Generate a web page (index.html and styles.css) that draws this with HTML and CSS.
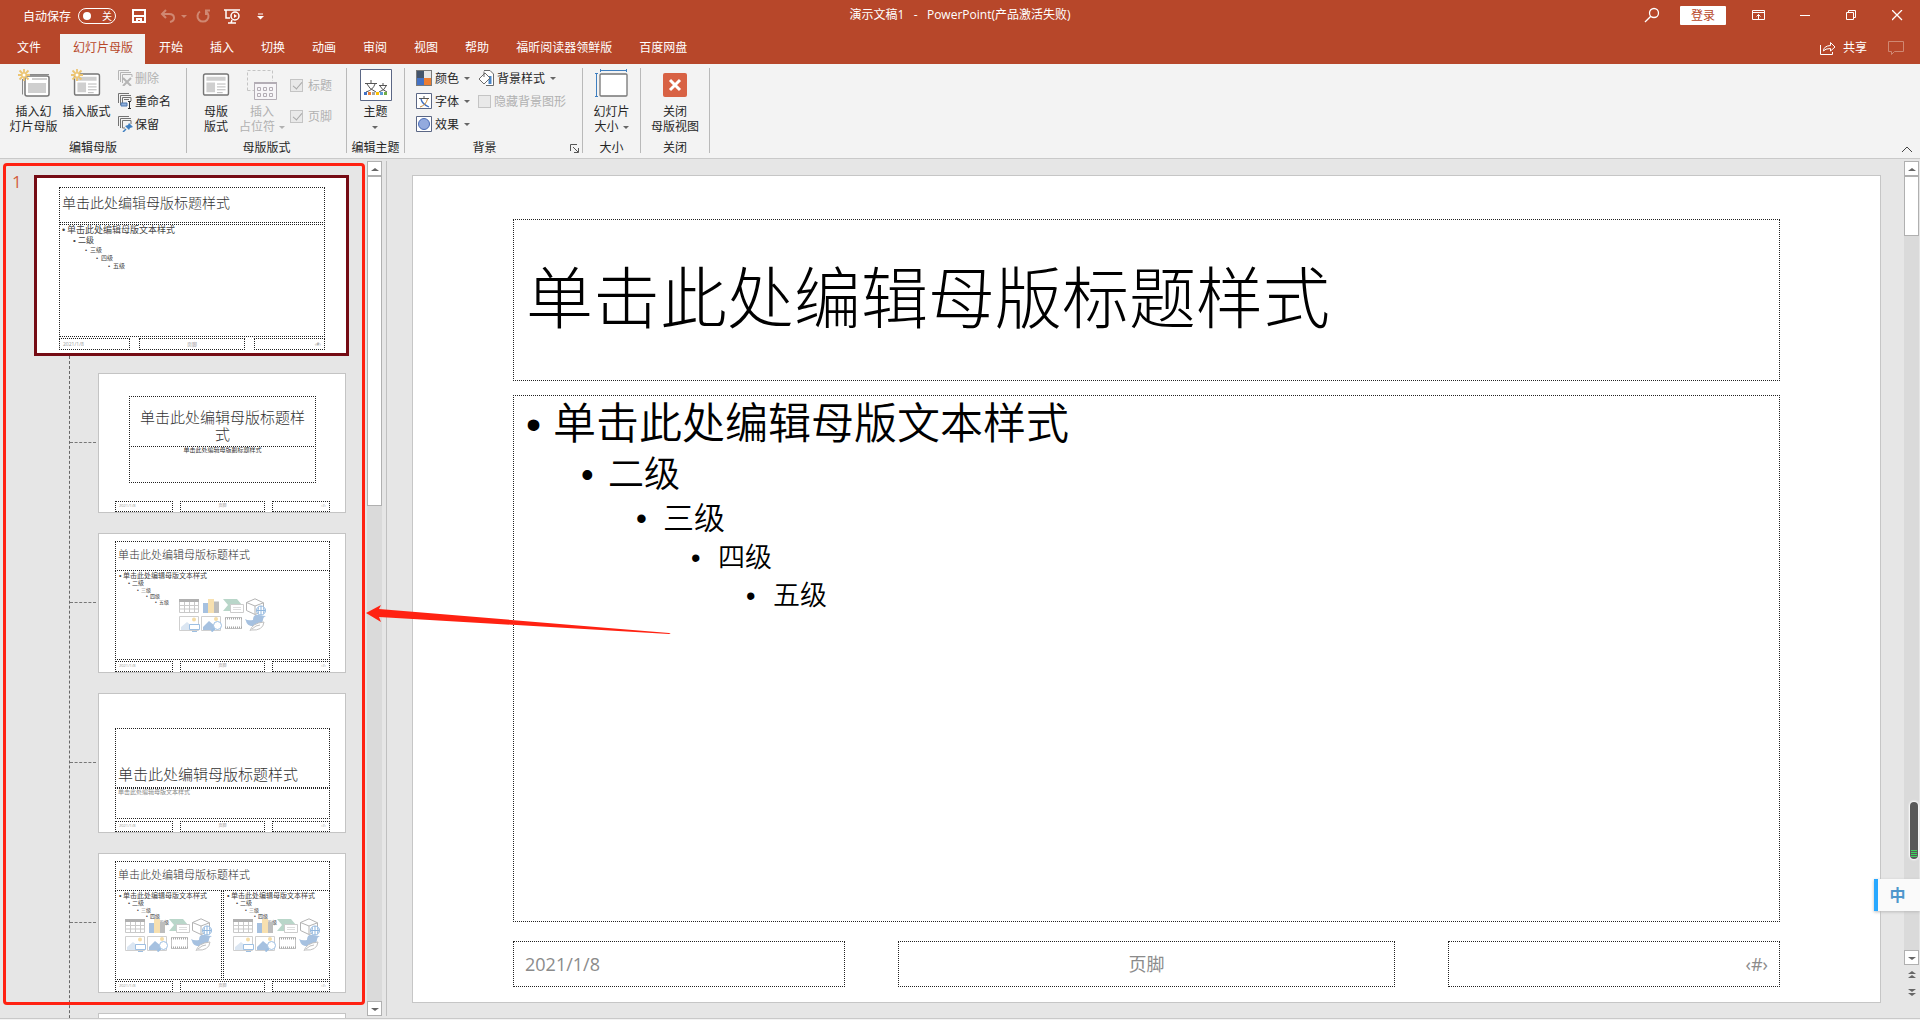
FILE: index.html
```html
<!DOCTYPE html>
<html lang="zh-CN">
<head>
<meta charset="utf-8">
<title>演示文稿1 - PowerPoint</title>
<link rel="stylesheet" href="styles.css">
</head>
<body>
<svg class="defs" aria-hidden="true">
  <symbol id="content-icons" viewBox="0 0 88 34">
    <g fill="none" stroke="#c9c9c9">
      <path d="M.5 1.500h19v13H.5zM.5 7.500h19M.5 11h19M5.500 4v10M10.500 4v10M15.500 4v10"/>
      <path d="M0 2.500h20" stroke="#b0b0b0" stroke-width="3"/>
    </g>
    <path d="M24 5h5v10h-5z" fill="#a6c1e0"/><path d="M29 1h6v14h-6z" fill="#f7e0b0"/><path d="M35 3.500h5V15h-5z" fill="#bdbdbd"/>
    <path d="M44 1h14l5 6-5 6H44l5-6z" fill="#b9d6c9"/>
    <path d="M51.500 6.500h13v8h-13z" fill="#fff" stroke="#ccc"/><path d="M54 9.500h8M54 11.500h8" stroke="#ddd"/>
    <path d="M67.500 4.500 76 .8l8.500 4v8L76 16.500l-8.500-4zM67.500 4.500 76 8l8.500-3.200M76 8v8" fill="#fff" stroke="#b3b3b3"/>
    <circle cx="82" cy="12.500" r="4.500" fill="#fff" stroke="#8fb6de"/><path d="M77.500 12.500h9M82 8v9M79.500 9.500q-1 3 0 6M84.500 9.500q1 3 0 6" fill="none" stroke="#8fb6de"/>
    <g fill="#fff" stroke="#cfcfcf"><path d="M.5 18.500h19v14H.5zM22.500 18.500h19v14h-19z"/></g>
    <path d="M2 32v-3l6-5 5 4v4z" fill="#dbe6f2"/><circle cx="15" cy="21.500" r="2" fill="#f5dca6"/>
    <path d="M10.500 26.500h10v5h-10zM13 33.500h5" fill="#fff" stroke="#9dbfe2"/>
    <path d="M24 32v-3l6-6 6 5v4z" fill="#a6c1e0"/><circle cx="37" cy="21" r="2" fill="#f5dca6"/>
    <circle cx="38.500" cy="27.500" r="4" fill="#fff" stroke="#9dbfe2"/><path d="m35.500 30.500-3 3" stroke="#9dbfe2" stroke-width="2"/>
    <path d="M46.500 19.500h16v11h-16z" fill="#fff" stroke="#c4c4c4"/><path d="M46 20.500h17M46 29.500h17" stroke="#a8a8a8" stroke-width="2" stroke-dasharray="1 1"/>
    <path d="M66 21q3 2 8 1 0-6 6-5 4 1 7 1-3 1-3 4-1 6-8 6-8 1-9-5z" fill="#a6c1e0"/>
    <path d="M71 33q2-8 14-9-1 9-13 8M73 31q4-4 8-4" fill="#fff" stroke="#c0c0c0"/>
  </symbol>
  <symbol id="layout" viewBox="0 0 28 24">
    <rect x="1" y="1" width="26" height="22" rx="2" fill="#fff" stroke="#767676" stroke-width="1.500"/>
    <path d="M4 4h20v4H4zM4 10h9v10H4z" fill="#cfcfcf"/><path d="M15 11.500h9M15 14.500h9M15 17.500h9M15 20.500h6" stroke="#b5b5b5"/>
  </symbol>
  <symbol id="spark" viewBox="0 0 12 12">
    <path d="M6 0v12M0 6h12M1.500 1.500l9 9M10.500 1.500l-9 9" stroke="#ecc573" stroke-width="1.800"/><circle cx="6" cy="6" r="1.500" fill="#fff"/>
  </symbol>
</svg>

<div class="app">
  <header class="titlebar">
    <div class="quick">
      <label class="autosave" for="autosave">自动保存</label>
      <button class="toggle" id="autosave" role="switch" aria-checked="false"><i></i>关</button>
      <button class="qa save" aria-label="保存"><svg width="16" height="16" fill="none" stroke="#fff" stroke-width="2"><path d="M2 2h12v12H2z"/><path d="M3 8h10M6 14v-3h4v3" /></svg></button>
      <button class="qa undo" aria-label="撤消"><svg width="16" height="16" fill="none" stroke="#d08872" stroke-width="2"><path d="M6 2 2 6l4 4M2 6h7q5 0 5 4 0 3-4 4"/></svg></button>
      <i class="arrow faded"></i>
      <button class="qa redo" aria-label="恢复"><svg width="16" height="16" fill="none" stroke="#d08872" stroke-width="2"><path d="M5 3.500a5.500 5.500 0 1 0 6 0M11 7V2.500h4"/></svg></button>
      <button class="qa show" aria-label="从头开始"><svg width="18" height="17" fill="none" stroke="#fff" stroke-width="1.500"><path d="M1 2h16M3 2v8h4M5 15h8M8 15l1-3"/><circle cx="12" cy="8" r="4"/><path d="m11 6 3 2-3 2z" fill="#fff" stroke="none"/></svg></button>
      <button class="qa more" aria-label="自定义"><svg width="7" height="7"><path d="M1 1h5" stroke="#fff"/><path d="M0 3h7L3.500 6.500z" fill="#fff"/></svg></button>
    </div>
    <h1 class="doc-name">演示文稿1&nbsp;&nbsp; -&nbsp;&nbsp; PowerPoint(产品激活失败)</h1>
    <div class="window">
      <button class="search" aria-label="搜索"><svg width="16" height="16" fill="none" stroke="#fff" stroke-width="1.300"><circle cx="10" cy="6" r="4.500"/><path d="M6.800 9.200 1 15"/></svg></button>
      <button class="login">登录</button>
      <button class="win" aria-label="功能区显示选项"><svg width="14" height="12" fill="none" stroke="#fff"><path d="M.5 1.500h12v9H.5zM.5 3.500h12M6.500 10V5.500M4.500 7.500l2-2 2 2"/></svg></button>
      <button class="win" aria-label="最小化"><svg width="11" height="11"><path d="M0 5.500h10" stroke="#fff"/></svg></button>
      <button class="win" aria-label="还原"><svg width="11" height="11" fill="none" stroke="#fff"><path d="M.5 2.500h7v7h-7zM2.500 2.500v-2h7v7h-2"/></svg></button>
      <button class="win" aria-label="关闭"><svg width="11" height="11"><path d="m0 0 10 10M10 0 0 10" stroke="#fff" stroke-width="1.300"/></svg></button>
    </div>
  </header>

  <nav class="tabs">
    <button class="file">文件</button>
    <button class="active">幻灯片母版</button>
    <button>开始</button><button>插入</button><button>切换</button><button>动画</button><button>审阅</button><button>视图</button><button>帮助</button><button>福昕阅读器领鲜版</button><button>百度网盘</button>
    <button class="share"><svg width="16" height="14" fill="none" stroke="#fff"><path d="M.5 4v9.500h12V11M3.500 10q0-5 7-5.500V1.500L15 6l-4.500 4V7.500Q5 7.500 3.500 10z"/></svg>共享</button>
    <button class="comments" aria-label="批注"><svg width="17" height="15" fill="none" stroke="#d08872"><path d="M.5.5h15v10h-9l-3 3v-3h-3z"/></svg></button>
  </nav>

  <section class="ribbon">
    <div class="group g-edit">
      <div class="tools">
        <button class="big"><svg width="32" height="30"><path d="M4.500 10v15.500M7 5.500h24" stroke="#8a8a8a" fill="none"/><rect x="7" y="7" width="24" height="20" rx="2" fill="#fff" stroke="#767676" stroke-width="1.500"/><path d="M14 9h15v2H14zM10 14h18v10H10z" fill="#cfcfcf"/><use href="#spark" width="12" height="12"/></svg><span>插入幻<br>灯片母版</span></button>
        <button class="big"><svg width="32" height="30"><use href="#layout" x="2" y="4" width="28" height="23"/><use href="#spark" width="12" height="12"/></svg><span>插入版式</span></button>
        <div class="stack">
          <button disabled><svg width="16" height="16" fill="none" stroke="#b5b5b5"><path d="M1.500 10V.5H12M3.500 12V2.500H14M5.500 13V4.500H15V7"/><path d="m6 8 8 8M14 8l-8 8" stroke-width="2"/></svg>删除</button>
          <button><svg width="16" height="16" fill="none" stroke="#737373"><path d="M1.500 10V.5H12M3.500 12V2.500H14M5.500 13V4.500H14V8M7 6.500h5"/><path d="M4 10h6v3H4z" fill="#8fb0dc" stroke="#4f78b0"/><path d="M12.500 9v6M11 8.500h3M11 15.500h3" stroke="#333"/></svg>重命名</button>
          <button><svg width="16" height="16" fill="none" stroke="#737373"><path d="M1.500 10V.5H12M3.500 12V2.500H14M8 12H5.500V4.500H14V8"/><path d="m12 7 4 4-3 1-1 2-4-4 3-1z" fill="#3f7fc0" stroke="none"/><path d="m9 13-3 3" stroke="#3f7fc0" stroke-width="1.500"/></svg>保留</button>
        </div>
      </div>
      <h2>编辑母版</h2>
    </div>
    <div class="group g-layout">
      <div class="tools">
        <button class="big"><svg width="32" height="30"><use href="#layout" x="2" y="4" width="28" height="23"/></svg><span>母版<br>版式</span></button>
        <button class="big" disabled><svg width="32" height="32" fill="none"><path d="M1.500 21.500v-20h25V12M1.500 21.500H8" stroke="#c4c4c4" stroke-dasharray="3 2"/><path d="M8.500 13.500h22v17h-22z" fill="#f7f5f8" stroke="#b3adb5"/><path d="M8 14h23" stroke="#b3adb5" stroke-width="2"/><path d="M11.500 18.500h3v3h-3zM17.500 18.500h3v3h-3zM23.500 18.500h3v3h-3zM11.500 24.500h3v3h-3zM17.500 24.500h3v3h-3zM23.500 24.500h3v3h-3z" stroke="#b3adb5"/></svg><span>插入<br>占位符<i class="arrow"></i></span></button>
        <div class="checks">
          <label><input type="checkbox" checked disabled>标题</label>
          <label><input type="checkbox" checked disabled>页脚</label>
        </div>
      </div>
      <h2>母版版式</h2>
    </div>
    <div class="group g-theme">
      <div class="tools">
        <button class="big"><svg width="32" height="32"><path d="M.5.5h31v31H.5z" fill="#fff" stroke="#5b6785"/><g fill="none" stroke="#555"><path d="M5 14.500h12M11 11v3.500M15 15q-2 6-9 8M7 15q2 5 9 8M19 16.500h8M23 14v2.500M26 17q-1 4-7 6M20 17q2 4 7 6"/></g><path d="M4 23h3v3H4z" fill="#4472c4"/><path d="M8 23h3v3H8z" fill="#ed7d31"/><path d="M12 23h3v3h-3z" fill="#a5a5a5"/><path d="M16 23h3v3h-3z" fill="#ffc000"/><path d="M20 23h3v3h-3z" fill="#5b9bd5"/><path d="M24 23h3v3h-3z" fill="#70ad47"/></svg><span>主题<br><i class="arrow"></i></span></button>
      </div>
      <h2>编辑主题</h2>
    </div>
    <div class="group g-back">
      <div class="tools">
        <div class="stack">
          <button><svg width="16" height="16"><path d="M0 0h16v16H0z" fill="#7a7a7a"/><path d="M1 1h7v7H1z" fill="#44546a"/><path d="M8 1h7v7H8z" fill="#e7e6e6"/><path d="M1 8h7v7H1z" fill="#4472c4"/><path d="M8 8h7v7H8z" fill="#ed7d31"/></svg>颜色<i class="arrow"></i></button>
          <button><svg width="16" height="16" fill="none"><path d="M.5.5h15v15H.5z" fill="#fff" stroke="#5b6785"/><path d="M3 5.500h10M8 3v2.500" stroke="#555"/><path d="M5 6q1 5 8 8" stroke="#3f6fc0" stroke-width="1.300"/><path d="M11.500 6Q10 12 4 14" stroke="#c58a3a"/></svg>字体<i class="arrow"></i></button>
          <button><svg width="16" height="16"><path d="M.5.5h15v15H.5z" fill="#fff" stroke="#5b6785"/><circle cx="8" cy="8" r="5.500" fill="#93aade" stroke="#4a6cb5"/></svg>效果<i class="arrow"></i></button>
        </div>
        <div class="stack">
          <button><svg width="16" height="16" fill="none" stroke="#6b6b6b"><path d="M6 .5h6L15.500 4v11.500H8" fill="#fff"/><path d="M12 6v8" stroke="#4a86c8" stroke-width="3"/><path d="m1 9 6-6 5 5-6 6zM6 7V1.500" fill="#fff"/></svg>背景样式<i class="arrow"></i></button>
          <label><input type="checkbox" disabled>隐藏背景图形</label>
        </div>
      </div>
      <h2>背景</h2>
      <button class="launcher" aria-label="设置背景格式"><svg width="9" height="9" fill="none" stroke="#555"><path d="M.5 7V.5H7M3 3l5 5M8.500 4v4.500H4"/></svg></button>
    </div>
    <div class="group g-size">
      <div class="tools">
        <button class="big"><svg width="33" height="30" fill="none"><path d="M5 1.500h27M5.500 0v3M31.500 0v3M1.500 5v22M0 4.500h3M0 27.500h3" stroke="#3f7fc0"/><rect x="5" y="5" width="27" height="22" rx="1" fill="#fff" stroke="#767676" stroke-width="1.300"/></svg><span>幻灯片<br>大小<i class="arrow"></i></span></button>
      </div>
      <h2>大小</h2>
    </div>
    <div class="group g-close">
      <div class="tools">
        <button class="big"><svg width="32" height="30"><rect x="4" y="4" width="24" height="24" rx="2" fill="#d86244"/><path d="m11 11 10 10M21 11 11 21" stroke="#fff" stroke-width="3"/></svg><span>关闭<br>母版视图</span></button>
      </div>
      <h2>关闭</h2>
    </div>
    <button class="collapse" aria-label="折叠功能区"><svg width="12" height="7" fill="none" stroke="#444"><path d="m1 6 5-5 5 5"/></svg></button>
  </section>

  <main class="work">
    <aside class="thumbs">
      <div class="master">
        <b>1</b>
        <div class="mini large">
          <div class="ph name">单击此处编辑母版标题样式</div>
          <ul class="ph body levels"><li>单击此处编辑母版文本样式</li><li>二级</li><li>三级</li><li>四级</li><li>五级</li></ul>
          <div class="feet"><p class="ph">2021/1/8</p><p class="ph">页脚</p><p class="ph">‹#›</p></div>
        </div>
      </div>
      <ul class="layouts">
        <li><div class="mini cover">
          <div class="ph name">单击此处编辑母版标题样式</div>
          <div class="ph sub">单击此处编辑母版副标题样式</div>
          <div class="feet"><p class="ph">2021/1/8</p><p class="ph">页脚</p><p class="ph">‹#›</p></div>
        </div></li>
        <li><div class="mini">
          <div class="ph name">单击此处编辑母版标题样式</div>
          <div class="bodies">
            <div class="ph body"><ul class="levels"><li>单击此处编辑母版文本样式</li><li>二级</li><li>三级</li><li>四级</li><li>五级</li></ul><svg class="insert"><use href="#content-icons"/></svg></div>
          </div>
          <div class="feet"><p class="ph">2021/1/8</p><p class="ph">页脚</p><p class="ph">‹#›</p></div>
        </div></li>
        <li><div class="mini section">
          <div class="ph name">单击此处编辑母版标题样式</div>
          <div class="ph sub">单击此处编辑母版文本样式</div>
          <div class="feet"><p class="ph">2021/1/8</p><p class="ph">页脚</p><p class="ph">‹#›</p></div>
        </div></li>
        <li><div class="mini">
          <div class="ph name">单击此处编辑母版标题样式</div>
          <div class="bodies">
            <div class="ph body"><ul class="levels"><li>单击此处编辑母版文本样式</li><li>二级</li><li>三级</li><li>四级</li><li>五级</li></ul><svg class="insert"><use href="#content-icons"/></svg></div>
            <div class="ph body"><ul class="levels"><li>单击此处编辑母版文本样式</li><li>二级</li><li>三级</li><li>四级</li><li>五级</li></ul><svg class="insert"><use href="#content-icons"/></svg></div>
          </div>
          <div class="feet"><p class="ph">2021/1/8</p><p class="ph">页脚</p><p class="ph">‹#›</p></div>
        </div></li>
        <li><div class="mini"></div></li>
      </ul>
      <div class="frame"></div>
    </aside>
    <div class="scroll left">
      <button class="step" aria-label="向上"><i class="arrow up"></i></button>
      <div class="grip"></div>
      <button class="step end" aria-label="向下"><i class="arrow"></i></button>
    </div>
    <div class="stage">
      <article class="slide">
        <h2 class="ph title">单击此处编辑母版标题样式</h2>
        <ul class="ph text levels"><li>单击此处编辑母版文本样式</li><li>二级</li><li>三级</li><li>四级</li><li>五级</li></ul>
        <p class="ph date">2021/1/8</p>
        <p class="ph footer">页脚</p>
        <p class="ph number">‹#›</p>
      </article>
    </div>
    <div class="scroll right">
      <button class="step" aria-label="向上"><i class="arrow up"></i></button>
      <div class="grip"></div>
      <button class="step end" aria-label="向下"><i class="arrow"></i></button>
      <button class="page" aria-label="上一张"><i class="arrow up"></i><i class="arrow up"></i></button>
      <button class="page" aria-label="下一张"><i class="arrow"></i><i class="arrow"></i></button>
    </div>
    <svg class="pointer" width="306" height="32" aria-hidden="true"><path d="M0 9 15 1l-2 4 290 24q3 1 0 1L13 13l2 5z" fill="#ff2212"/></svg>
    <div class="meter"><i></i></div>
    <button class="ime">中</button>
  </main>
</div>
</body>
</html>
```
FILE: styles.css
```css
* { box-sizing: border-box; }

body {
  margin: 0;
  background: #f3f3f3;
  color: #262626;
  font: 12px/15px "Open Sans", "Noto Sans CJK SC", sans-serif;
}

h1, h2, p, ul { margin: 0; padding: 0; font: inherit; }
ul { list-style: none; }
svg { display: block; flex: none; }
button {
  margin: 0;
  padding: 0;
  border: 0;
  background: none;
  color: inherit;
  font: inherit;
  white-space: nowrap;
}
.defs { position: absolute; width: 0; height: 0; }

.app { display: flex; flex-direction: column; height: 100vh; overflow: hidden; }

.arrow {
  display: inline-block;
  border: solid transparent;
  border-width: 3px 3px 0;
  border-top-color: #666;
  vertical-align: middle;
}
.arrow.up { border-width: 0 3px 3px; border-bottom-color: #666; }
.arrow.faded { border-top-color: #d08872; }

/* Title bar */
.titlebar {
  display: grid;
  grid-template-columns: 1fr auto 1fr;
  height: 34px;
  padding-bottom: 8px;
  background: #b7472a;
  color: #fff;
}
.quick { display: flex; align-items: center; padding: 6px 0 0 23px; }
.toggle {
  display: flex;
  align-items: center;
  gap: 11px;
  width: 38px;
  height: 16px;
  margin: 0 15px 0 7px;
  padding-left: 4px;
  border: 1px solid #fff;
  border-radius: 8px;
  font-size: 10px;
}
.toggle i { width: 8px; height: 8px; border-radius: 50%; background: #fff; }
.undo { margin: 0 5px 0 13px; }
.redo { margin: 0 12px 0 8px; }
.more { margin-left: 16px; }
.doc-name { padding-top: 7px; }
.window { display: flex; justify-content: flex-end; padding: 6px 0 0; }
.search { align-self: center; margin: 0 20px 2px 0; }
.login {
  width: 46px;
  height: 19px;
  margin-right: 10px;
  border-radius: 1px;
  background: #fff;
  color: #b7472a;
}
.win { display: grid; place-items: center; width: 46px; height: 18px; }

/* Tabs */
.tabs {
  display: flex;
  gap: 1px;
  height: 30px;
  padding-right: 15px;
  background: #b7472a;
  color: #fff;
}
.tabs button { padding: 0 13px 3px; }
.tabs .file { padding: 0 18px 3px 17px; }
.tabs .active { width: 85px; background: #f3f3f3; color: #b7472a; }
.tabs .share { display: flex; align-items: center; gap: 7px; margin-left: auto; padding: 0 20px 3px; }
.tabs .comments { padding: 0 0 1px; }

/* Ribbon */
.ribbon {
  display: flex;
  height: 95px;
  padding: 4px 7px 5px 0;
  border-bottom: 1px solid #c9c9c9;
}
.group {
  display: flex;
  flex-direction: column;
  position: relative;
  border-right: 1px solid #b9b9b9;
}
.group h2 { margin-top: auto; text-align: center; line-height: 10px; white-space: nowrap; }
.g-edit { width: 187px; }
.g-layout { width: 160px; }
.g-theme { width: 58px; }
.g-back { width: 178px; }
.g-size { width: 58px; }
.g-close { width: 69px; }
.tools { display: flex; }
.g-edit .tools { padding-left: 7px; }
.g-layout .tools { padding-left: 8px; }
.g-back .tools { padding-left: 11px; gap: 8px; }
.g-theme .tools, .g-size .tools, .g-close .tools { justify-content: center; }
.big {
  display: flex;
  flex-direction: column;
  align-items: center;
  width: 53px;
  padding-top: 1px;
}
.g-layout .big { width: 42px; }
.g-layout .big:disabled { width: 50px; }
.big svg { height: 35px; }
.big .arrow { margin-left: 4px; }
.g-theme .big .arrow { margin: 0; }
.stack { display: flex; flex-direction: column; gap: 1px; }
.stack button, .stack label { display: flex; align-items: center; gap: 3px; height: 22px; padding-bottom: 2px; }
.stack button .arrow { margin-left: 2px; }
.g-edit .stack { margin-left: 4px; }
.g-edit .stack svg { margin-right: -1px; }
button:disabled, label:has(:disabled) { color: #b1b1b1; }
button:disabled .arrow { border-top-color: #b1b1b1; }
.checks { display: flex; flex-direction: column; gap: 16px; padding: 10px 0 0 3px; }
.checks label { display: flex; gap: 5px; }
input[type="checkbox"] {
  appearance: none;
  width: 13px;
  height: 13px;
  margin: 1px 0;
  border: 1px solid #c4c4c4;
  background: #e9e9e9;
}
input:checked::after {
  content: "";
  display: block;
  width: 4px;
  height: 8px;
  margin: 0 0 0 4px;
  border: solid #a8a8a8;
  border-width: 0 1px 1px 0;
  rotate: 40deg;
}
.launcher { position: absolute; right: 3px; bottom: 0; }
.g-back h2 { padding-right: 18px; }
.collapse { align-self: flex-end; margin-left: auto; }

/* Workspace */
.work {
  display: flex;
  flex: 1;
  min-height: 0;
  position: relative;
  margin-bottom: 1px;
  border-bottom: 1px solid #c9c9c9;
  background: #e6e6e6;
}
.ph { border: 1px dotted #222; }

.thumbs {
  position: relative;
  flex: none;
  width: 367px;
  padding-top: 16px;
  overflow: hidden;
}
.frame {
  position: absolute;
  inset: 4px 2px 13px 3px;
  border: 3px solid #ff2212;
  border-radius: 4px;
}
.master { display: flex; }
.master b { width: 34px; padding-left: 12px; color: #d35f42; font-size: 17px; font-weight: 400; line-height: 14px; }
.layouts {
  display: flex;
  flex-direction: column;
  gap: 20px;
  margin-left: 69px;
  padding: 17px 0 0 28px;
  border-left: 1px dashed #666;
}
.layouts > li { position: relative; }
.layouts > li::before {
  content: "";
  position: absolute;
  top: 69px;
  left: -28px;
  width: 26px;
  border-top: 1px dashed #777;
}

.mini {
  display: flex;
  flex-direction: column;
  width: 248px;
  height: 140px;
  padding: 7px 15px 0 16px;
  border: 1px solid #c4c4c4;
  background: #fff;
  overflow: hidden;
  color: #333;
  font-size: 7px;
  line-height: 7px;
  white-space: nowrap;
}
.mini .name { height: 30px; padding: 0 2px; font-size: 11px; font-weight: 300; line-height: 26px; }
.bodies { display: flex; gap: 1px; height: 90px; margin-top: -1px; }
.mini .body { position: relative; flex: 1; min-width: 0; }
.insert { position: absolute; inset: 0; width: 88px; height: 34px; margin: auto; }
.feet {
  display: grid;
  grid-template-columns: 58fr 85fr 58fr;
  gap: 7px;
  height: 11px;
  margin-top: auto;
  color: #999;
  font-size: 4px;
}
.feet p { padding: 0 3px; }
.feet p:nth-child(2) { text-align: center; }
.feet p:nth-child(3) { text-align: right; }

.mini.large {
  width: 315px;
  height: 181px;
  padding: 9px 21px 3px 22px;
  border: 3px solid #750b14;
}
.large .name { height: 36px; font-size: 14px; line-height: 30px; }
.large .body { flex: none; height: 113px; margin-top: 1px; }
.large .feet { grid-template-columns: 71fr 106fr 71fr; gap: 9px; height: 12px; font-size: 5px; line-height: 10px; }

.mini.cover { padding-top: 22px; }
.mini.cover .name, .mini.section .name { font-size: 15px; line-height: 17px; }
.mini.cover .name { height: 51px; margin: 0 14px; padding: 12px 8px 0; text-align: center; white-space: normal; }
.cover .sub { height: 37px; margin: -1px 14px 0; text-align: center; font-size: 6px; }
.mini.section { padding-top: 34px; }
.mini.section .name { height: 60px; padding-top: 37px; }
.section .sub { height: 31px; padding-left: 2px; color: #888; font-size: 6px; line-height: 6px; }

/* Outline levels, indented step by step */
.levels li::before { content: "•"; display: inline-block; font-family: "Liberation Sans", sans-serif; }
.mini .levels { padding-top: 1px; color: #444; }
.mini .levels li { height: 6px; padding-left: 3px; font-size: 5px; line-height: 7px; }
.mini .levels li::before { width: 4px; }
.mini .levels li:nth-child(1) { height: 8px; font-size: 7px; }
.mini .levels li:nth-child(2) { height: 7px; padding-left: 12px; font-size: 6px; }
.mini .levels li:nth-child(3) { padding-left: 21px; }
.mini .levels li:nth-child(4) { padding-left: 30px; }
.mini .levels li:nth-child(5) { padding-left: 39px; }
.mini.large .levels li { height: 8px; padding-left: 2px; font-size: 6px; line-height: 8px; }
.mini.large .levels li::before { width: 5px; }
.mini.large .levels li:nth-child(1) { height: 10px; font-size: 9px; }
.mini.large .levels li:nth-child(2) { height: 10px; padding-left: 13px; font-size: 8px; }
.mini.large .levels li:nth-child(3) { padding-left: 25px; }
.mini.large .levels li:nth-child(4) { padding-left: 36px; }
.mini.large .levels li:nth-child(5) { padding-left: 48px; }

/* Slide being edited */
.stage { flex: 1; min-width: 0; margin: 2px 0 2px 4px; padding: 14px 23px 0 25px; border-left: 1px solid #c0c0c0; }
.slide {
  display: grid;
  grid-template-columns: 333fr 53fr 497fr 53fr 333fr;
  grid-template-rows: 162fr 14fr 527fr 19fr 46fr;
  aspect-ratio: 1469 / 828;
  padding: 43px 100px 15px;
  border: 1px solid #c6c6c6;
  background: #fff;
  color: #000;
}
.title {
  display: flex;
  align-items: center;
  grid-area: 1 / 1 / 2 / 6;
  padding: 0 12px 6px;
  font-size: 67px;
  font-weight: 300;
  line-height: 80px;
}
.text { grid-area: 3 / 1 / 4 / 6; padding-top: 2px; font-size: 27px; font-weight: 350; }
.text li { padding-left: 12px; line-height: 50px; }
.text li::before { width: 27px; }
.text li:nth-child(1) { font-size: 43px; line-height: 49px; }
.text li:nth-child(2) { padding-left: 67px; font-size: 36px; }
.text li:nth-child(3) { padding-left: 122px; font-size: 31px; line-height: 34px; }
.text li:nth-child(4) { padding-left: 177px; line-height: 42px; }
.text li:nth-child(5) { padding-left: 232px; line-height: 32px; }
.date, .footer, .number { grid-row: 5; padding: 0 11px; color: #8b8b8b; font-size: 18px; line-height: 44px; }
.date { grid-column: 1; }
.footer { grid-column: 3; text-align: center; }
.number { grid-column: 5; text-align: right; }

/* Scroll bars */
.scroll {
  display: flex;
  flex-direction: column;
  flex: none;
  width: 15px;
  margin: 2px 0;
  background: #dadada;
}
.scroll .step { height: 15px; border: 1px solid #b0b0b0; background: #fff; line-height: 9px; }
.scroll .arrow { border-left-width: 4px; border-right-width: 4px; }
.grip { height: 330px; border: 1px solid #b0b0b0; background: #fff; }
.right .grip { height: 60px; }
.end { margin-top: auto; }
.scroll.right { width: 16px; padding-right: 1px; background: linear-gradient(to right, #dadada 15px, #e6e6e6 15px); }
.page { display: flex; flex-direction: column; align-items: center; justify-content: center; gap: 1px; height: 18px; background: #e6e6e6; }
.page:last-child { height: 33px; padding-bottom: 15px; }

/* Things floating over the workspace */
.pointer { position: absolute; top: 445px; left: 366px; }
.meter {
  position: absolute;
  top: 643px;
  right: 2px;
  display: flex;
  align-items: flex-end;
  width: 8px;
  height: 57px;
  padding: 2px 1px;
  border-radius: 4px;
  background: #595959;
  box-shadow: 0 0 2px 1px #fff;
}
.meter i { flex: 1; height: 7px; background: repeating-linear-gradient(#3bd65c 0 1px, #595959 1px 2px); }
.ime {
  position: absolute;
  top: 720px;
  right: 0;
  width: 46px;
  height: 32px;
  padding-right: 3px;
  border-left: 4px solid #28a8ff;
  background: #fafafa;
  box-shadow: 0 1px 3px #bbb;
  color: #4f97cc;
  font-size: 16px;
  font-weight: 700;
}
```
